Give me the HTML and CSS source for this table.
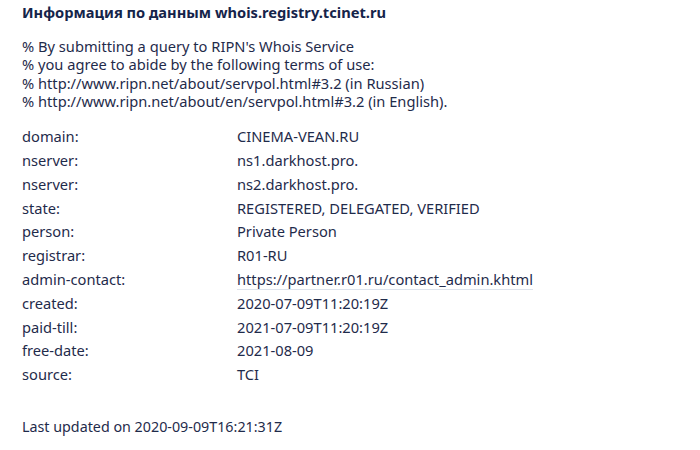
FILE: index.html
```html
<!DOCTYPE html>
<html lang="ru">
<head>
<meta charset="utf-8">
<link rel="stylesheet" href="styles.css">
<title>Whois</title>
</head>
<body>
<main class="page">
  <h1 class="title">Информация по данным whois.registry.tcinet.ru</h1>
  <div class="notice">
    <div>% By submitting a query to RIPN's Whois Service</div>
    <div>% you agree to abide by the following terms of use:</div>
    <div>% http://www.ripn.net/about/servpol.html#3.2 (in Russian)</div>
    <div>% http://www.ripn.net/about/en/servpol.html#3.2 (in English).</div>
  </div>
  <div class="records">
    <div class="row"><span class="key">domain:</span><span class="val">CINEMA-VEAN.RU</span></div>
    <div class="row"><span class="key">nserver:</span><span class="val">ns1.darkhost.pro.</span></div>
    <div class="row"><span class="key">nserver:</span><span class="val">ns2.darkhost.pro.</span></div>
    <div class="row"><span class="key">state:</span><span class="val">REGISTERED, DELEGATED, VERIFIED</span></div>
    <div class="row"><span class="key">person:</span><span class="val">Private Person</span></div>
    <div class="row"><span class="key">registrar:</span><span class="val">R01-RU</span></div>
    <div class="row"><span class="key">admin-contact:</span><span class="val"><a class="link" href="#">https://partner.r01.ru/contact_admin.khtml</a></span></div>
    <div class="row"><span class="key">created:</span><span class="val">2020-07-09T11:20:19Z</span></div>
    <div class="row"><span class="key">paid-till:</span><span class="val">2021-07-09T11:20:19Z</span></div>
    <div class="row"><span class="key">free-date:</span><span class="val">2021-08-09</span></div>
    <div class="row"><span class="key">source:</span><span class="val">TCI</span></div>
  </div>
  <p class="updated">Last updated on 2020-09-09T16:21:31Z</p>
</main>
</body>
</html>
```
FILE: styles.css
```css
html, body {
  margin: 0;
  padding: 0;
  background: #ffffff;
}
body {
  font-family: "Noto Sans", "Open Sans", sans-serif;
  font-size: 14.67px;
  color: #1f2b4b;
}
.page {
  padding: 2px 22px 0 22px;
}
.title {
  font-size: 14.67px;
  font-weight: 700;
  line-height: 20px;
  margin: 0;
  color: #15244a;
}
.notice {
  margin-top: 15px;
  line-height: 18.3px;
}
.records {
  margin-top: 15px;
}
.row {
  display: grid;
  grid-template-columns: 215px 1fr;
  line-height: 23.8px;
}
.link {
  color: inherit;
  text-decoration: none;
  border-bottom: 1px solid #dde3ec;
}
.updated {
  font-size: 14.3px;
  margin: 30px 0 0 0;
  line-height: 20px;
}
```
